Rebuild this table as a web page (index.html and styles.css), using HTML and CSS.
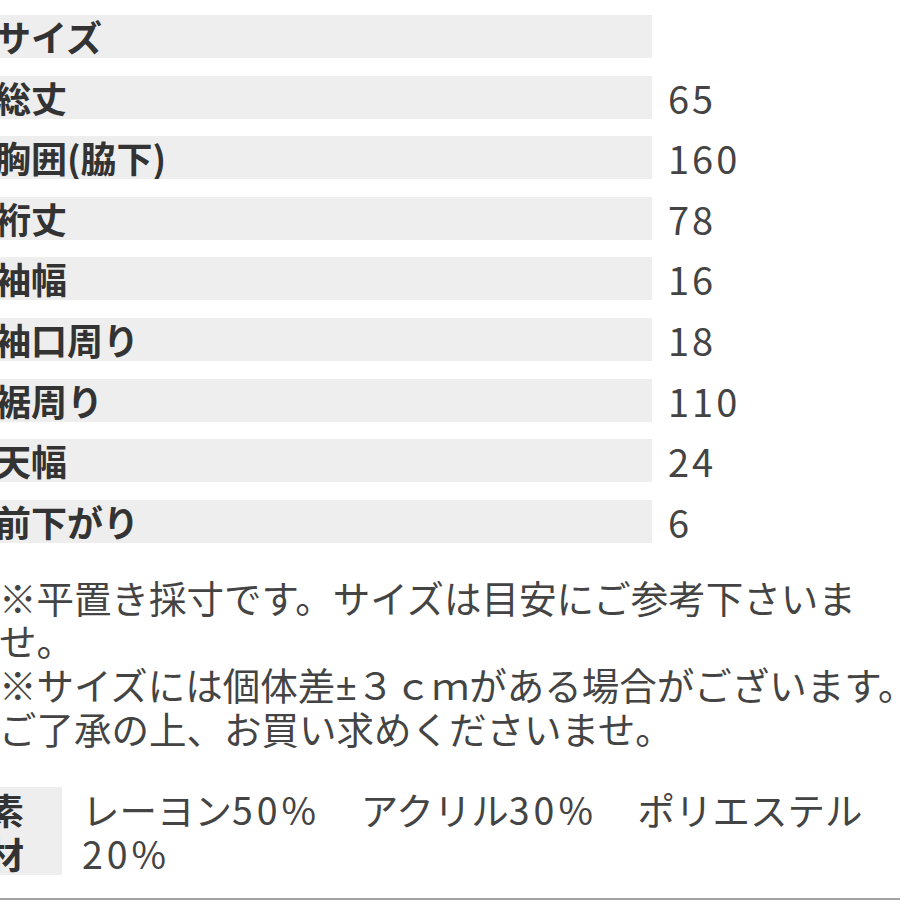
FILE: index.html
```
<!DOCTYPE html>
<html lang="ja">
<head>
<meta charset="utf-8">
<title>サイズ表</title>
<link rel="stylesheet" href="styles.css">
</head>
<body>
<div class="page">
  <div class="size-table">
    <div class="row"><div class="label">サイズ</div><div class="value"></div></div>
    <div class="row"><div class="label">総丈</div><div class="value">65</div></div>
    <div class="row"><div class="label">胸囲(脇下)</div><div class="value">160</div></div>
    <div class="row"><div class="label">裄丈</div><div class="value">78</div></div>
    <div class="row"><div class="label">袖幅</div><div class="value">16</div></div>
    <div class="row"><div class="label">袖口周り</div><div class="value">18</div></div>
    <div class="row"><div class="label">裾周り</div><div class="value">110</div></div>
    <div class="row"><div class="label">天幅</div><div class="value">24</div></div>
    <div class="row"><div class="label">前下がり</div><div class="value">6</div></div>
  </div>
  <p class="notes">※平置き採寸です。サイズは目安にご参考下さいま<br>せ。<br>※サイズには個体差<span class="sign">±</span>３ｃｍがある場合がございます。<br>ご了承の上、お買い求めくださいませ。</p>
  <div class="material">
    <div class="mat-label"><span class="mat-label-text">素材</span></div>
    <div class="mat-value">レーヨン<span class="num">50%</span>　アクリル<span class="num">30%</span>　ポリエステル<br><span class="num">20%</span></div>
  </div>
  <div class="rule"></div>
</div>
</body>
</html>
```
FILE: styles.css
```
html, body {
  margin: 0;
  padding: 0;
  background: #ffffff;
}
body {
  width: 900px;
  height: 900px;
  overflow: hidden;
  font-family: "Noto Sans CJK JP", "Noto Sans", sans-serif;
  color: #444444;
}
.page {
  width: 900px;
}
.size-table {
  display: grid;
  row-gap: 17.6px;
  padding-top: 15px;
}
.row {
  display: grid;
  grid-template-columns: 652px 1fr;
  height: 43px;
}
.label {
  background: #eeeeee;
  color: #333333;
  font-weight: 700;
  font-size: 36px;
  line-height: 43px;
  text-indent: -5px;
  white-space: nowrap;
  overflow: hidden;
}
.value {
  font-size: 38px;
  line-height: 43px;
  padding-left: 16px;
  letter-spacing: 3px;
  color: #444444;
}
.notes {
  margin: 32px 0 0 -1px;
  height: 175px;
  font-size: 37.5px;
  line-height: 43.7px;
  white-space: nowrap;
  color: #444444;
}
.sign {
  font-family: "Noto Sans", sans-serif;
  line-height: 1;
}
.material {
  display: flex;
  margin-top: 37px;
  height: 88px;
}
.mat-label {
  width: 62px;
  flex: none;
  background: #eeeeee;
  overflow: hidden;
}
.mat-label-text {
  display: block;
  width: 37px;
  margin-left: -12px;
  font-size: 36px;
  line-height: 44px;
  font-weight: 700;
  color: #333333;
}
.mat-value {
  padding-left: 20px;
  font-size: 37.5px;
  line-height: 44px;
  white-space: nowrap;
  color: #444444;
}
.num {
  letter-spacing: 4px;
  padding-right: 3px;
}
.rule {
  margin-top: 23px;
  border-top: 2px solid #a3a3a3;
}
```
